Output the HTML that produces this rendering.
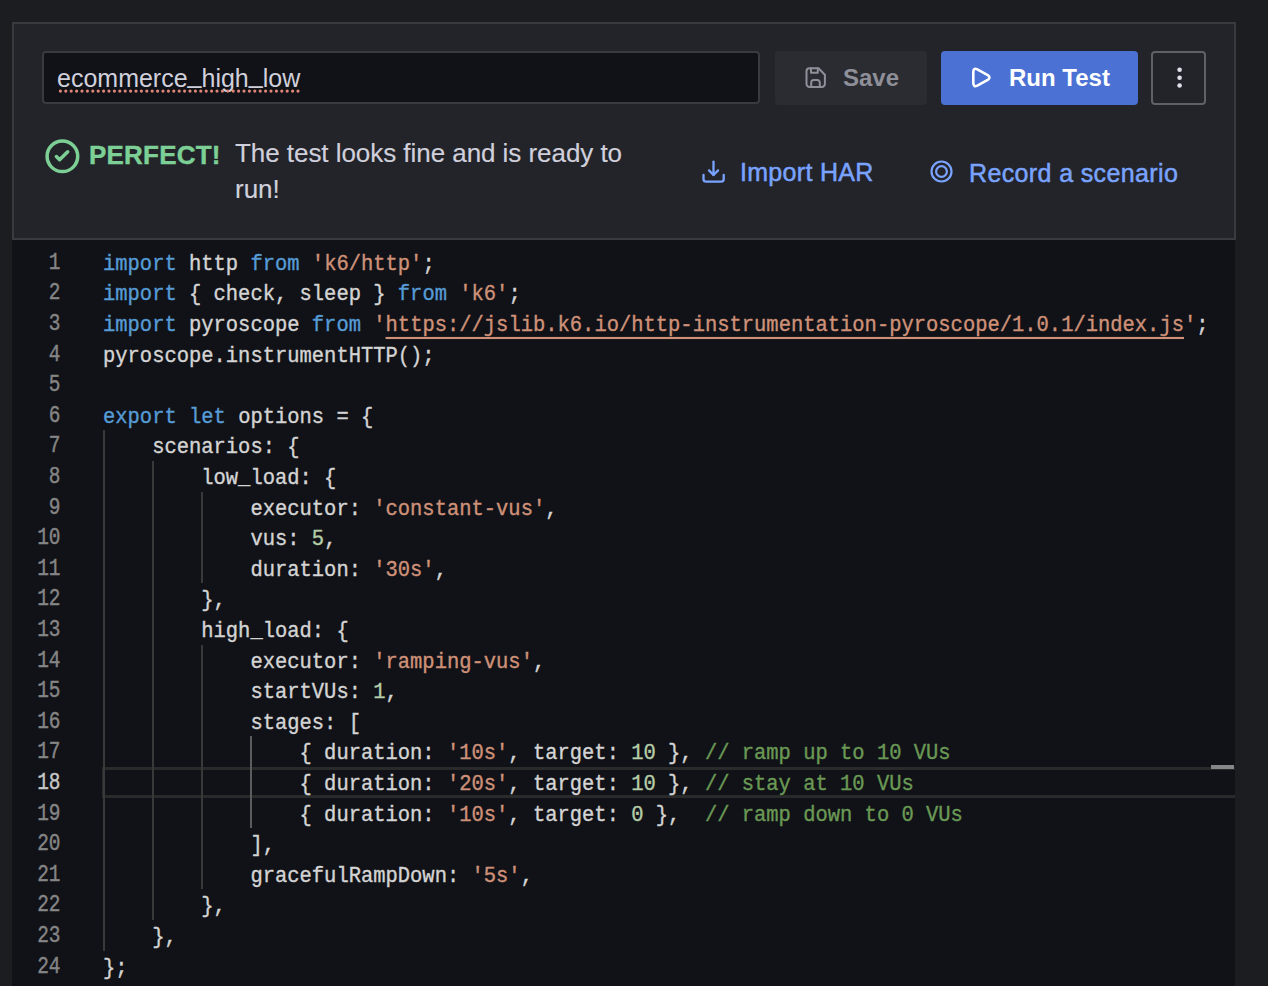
<!DOCTYPE html>
<html><head><meta charset="utf-8">
<style>
html,body{margin:0;padding:0;}
body{width:1268px;height:986px;overflow:hidden;background:#1c1d21;position:relative;font-family:"Liberation Sans",sans-serif;}
.abs{position:absolute;}
.panel{position:absolute;left:12px;top:22px;width:1220px;height:214px;border:2px solid #393a40;background:#232429;}
.inp{position:absolute;left:42px;top:51px;width:714px;height:49px;border:2px solid #393a40;border-radius:4px;background:#111217;}
.txt{position:absolute;white-space:pre;line-height:1;}
.us{position:relative;top:-4px;}
.save{position:absolute;left:775px;top:51px;width:152px;height:54px;border-radius:4px;background:#2b2c31;}
.run{position:absolute;left:941px;top:51px;width:197px;height:54px;border-radius:4px;background:#4a71d3;}
.kebab{position:absolute;left:1151px;top:51px;width:51px;height:50px;border:2px solid #5f6068;border-radius:4px;}
.code{position:absolute;left:12px;top:240px;width:1223px;height:746px;background:#111217;overflow:hidden;font-family:"Liberation Mono",monospace;font-size:20.48px;-webkit-text-stroke:0.35px currentColor;}
.ln{position:absolute;left:0;width:48.5px;text-align:right;color:#858585;height:30.6px;line-height:30.6px;transform:translateY(2px) scale(0.95,1.15);transform-origin:100% 20.5px;}
.ln.act{color:#c6c6c6;}
.cl{position:absolute;left:91px;white-space:pre;color:#d4d4d4;height:30.6px;line-height:30.6px;transform:translateY(2.6px) scaleY(1.06);transform-origin:0 20.5px;}
.k{color:#569cd6}.s{color:#ce9178}.n{color:#b5cea8}.c{color:#6a9955}
.u{color:#ce9178;text-decoration:underline;text-decoration-thickness:2px;text-underline-offset:6px;}
.g{position:absolute;width:2px;background:#393939;}
.g.ga{background:#5c5c5c;}
.cur{position:absolute;left:90px;width:1133px;height:31px;box-sizing:border-box;border:3px solid #2a2a2a;border-right:none;}
</style></head><body>
<div class="panel"></div>
<div class="inp"></div>
<div class="txt" style="left:57px;top:66px;font-size:25px;color:#d0d0dc;letter-spacing:0px">ecommerce<span class="us">_</span>high<span class="us">_</span>low</div>
<svg class="abs" style="left:57px;top:88px" width="250" height="6" fill="#de8577"><circle cx="3.40" cy="3.1" r="1.6"/><circle cx="8.80" cy="3.1" r="1.6"/><circle cx="14.20" cy="3.1" r="1.6"/><circle cx="19.60" cy="3.1" r="1.6"/><circle cx="25.00" cy="3.1" r="1.6"/><circle cx="30.40" cy="3.1" r="1.6"/><circle cx="35.80" cy="3.1" r="1.6"/><circle cx="41.20" cy="3.1" r="1.6"/><circle cx="46.60" cy="3.1" r="1.6"/><circle cx="52.00" cy="3.1" r="1.6"/><circle cx="57.40" cy="3.1" r="1.6"/><circle cx="62.80" cy="3.1" r="1.6"/><circle cx="68.20" cy="3.1" r="1.6"/><circle cx="73.60" cy="3.1" r="1.6"/><circle cx="79.00" cy="3.1" r="1.6"/><circle cx="84.40" cy="3.1" r="1.6"/><circle cx="89.80" cy="3.1" r="1.6"/><circle cx="95.20" cy="3.1" r="1.6"/><circle cx="100.60" cy="3.1" r="1.6"/><circle cx="106.00" cy="3.1" r="1.6"/><circle cx="111.40" cy="3.1" r="1.6"/><circle cx="116.80" cy="3.1" r="1.6"/><circle cx="122.20" cy="3.1" r="1.6"/><circle cx="127.60" cy="3.1" r="1.6"/><circle cx="133.00" cy="3.1" r="1.6"/><circle cx="138.40" cy="3.1" r="1.6"/><circle cx="143.80" cy="3.1" r="1.6"/><circle cx="149.20" cy="3.1" r="1.6"/><circle cx="154.60" cy="3.1" r="1.6"/><circle cx="160.00" cy="3.1" r="1.6"/><circle cx="165.40" cy="3.1" r="1.6"/><circle cx="170.80" cy="3.1" r="1.6"/><circle cx="176.20" cy="3.1" r="1.6"/><circle cx="181.60" cy="3.1" r="1.6"/><circle cx="187.00" cy="3.1" r="1.6"/><circle cx="192.40" cy="3.1" r="1.6"/><circle cx="197.80" cy="3.1" r="1.6"/><circle cx="203.20" cy="3.1" r="1.6"/><circle cx="208.60" cy="3.1" r="1.6"/><circle cx="214.00" cy="3.1" r="1.6"/><circle cx="219.40" cy="3.1" r="1.6"/><circle cx="224.80" cy="3.1" r="1.6"/><circle cx="230.20" cy="3.1" r="1.6"/><circle cx="235.60" cy="3.1" r="1.6"/><circle cx="241.00" cy="3.1" r="1.6"/></svg>
<div class="save"></div>
<svg class="abs" style="left:798px;top:60px" width="36" height="36" fill="none" stroke="#8e8f99" stroke-width="2" stroke-linecap="round" stroke-linejoin="round">
<path d="M11.5 8.3H20.5L26.9 14.7V23.9A3 3 0 0 1 23.9 26.9H11.5A3 3 0 0 1 8.5 23.9V11.3A3 3 0 0 1 11.5 8.3Z"/>
<path d="M13 8.3V12.7H19.8V8.3"/>
<path d="M13.2 26.9V22.5A2.5 2.5 0 0 1 15.7 20H19.3A2.5 2.5 0 0 1 21.8 22.5V26.9"/>
</svg>
<div class="txt" style="left:843px;top:66px;font-size:24px;font-weight:700;color:#8e8f99;">Save</div>
<div class="run"></div>
<svg class="abs" style="left:962px;top:60px" width="36" height="36" fill="none" stroke="#fff" stroke-width="2.6" stroke-linejoin="round">
<path d="M11.3 12.2Q11.3 7.4 15.3 9.4L26.2 15.4Q28.7 17.5 26.2 19.6L15.3 25.6Q11.3 27.6 11.3 22.8Z"/>
</svg>
<div class="txt" style="left:1009px;top:66px;font-size:24px;font-weight:700;color:#fff;">Run Test</div>
<div class="kebab"></div>
<svg class="abs" style="left:1146px;top:46px" width="66" height="64" fill="#e0e0ea">
<circle cx="33.6" cy="23.7" r="2.3"/><circle cx="33.6" cy="31.7" r="2.3"/><circle cx="33.6" cy="39.5" r="2.3"/>
</svg>
<svg class="abs" style="left:42px;top:136px" width="40" height="40" fill="none" stroke="#7cd095" stroke-width="3.5" stroke-linecap="round" stroke-linejoin="round">
<circle cx="20.4" cy="20.3" r="15.3"/>
<path d="M14.4 20.5L17.6 23.7L25.7 15.8"/>
</svg>
<div class="txt" style="left:89px;top:142px;font-size:26px;font-weight:700;color:#7cd095;letter-spacing:0.2px;-webkit-text-stroke:0.4px #7cd095">PERFECT!</div>
<div class="txt" style="left:235px;top:140px;font-size:26px;letter-spacing:-0.05px;-webkit-text-stroke:0.15px #d0d0dc;color:#d0d0dc;">The test looks fine and is ready to</div>
<div class="txt" style="left:235px;top:176px;font-size:26px;-webkit-text-stroke:0.15px #d0d0dc;color:#d0d0dc;">run!</div>
<svg class="abs" style="left:696px;top:154px" width="36" height="36" fill="none" stroke="#79a3ff" stroke-width="2.3" stroke-linecap="round" stroke-linejoin="round">
<path d="M17.5 7.6V21"/><path d="M13 16.4L17.5 21L22.1 16.4"/>
<path d="M7.5 21V25A2.7 2.7 0 0 0 10.2 27.7H25A2.7 2.7 0 0 0 27.7 25V21"/>
</svg>
<div class="txt" style="left:740px;top:160px;font-size:25px;letter-spacing:0.3px;-webkit-text-stroke:0.5px #79a3ff;color:#79a3ff;">Import HAR</div>
<svg class="abs" style="left:924px;top:154px" width="36" height="36" fill="none" stroke="#79a3ff" stroke-width="2.2">
<circle cx="17.5" cy="17.5" r="10"/><circle cx="17.5" cy="17.5" r="5.4"/>
</svg>
<div class="txt" style="left:969px;top:161px;font-size:25px;letter-spacing:0.37px;-webkit-text-stroke:0.5px #79a3ff;color:#79a3ff;">Record a scenario</div>
<div class="code">
<div class="cur" style="top:527.00px"></div>
<div class="g" style="left:90.90px;top:190.40px;height:520.20px"></div>
<div class="g" style="left:140.02px;top:221.00px;height:459.00px"></div>
<div class="g" style="left:189.14px;top:251.60px;height:91.80px"></div>
<div class="g" style="left:189.14px;top:404.60px;height:244.80px"></div>
<div class="g ga" style="left:238.26px;top:496.40px;height:91.80px"></div>
<div class="ln" style="top:6.80px">1</div>
<div class="cl" style="top:6.80px"><span class="k">import</span> http <span class="k">from</span> <span class="s">&#x27;k6/http&#x27;</span>;</div>
<div class="ln" style="top:37.40px">2</div>
<div class="cl" style="top:37.40px"><span class="k">import</span> { check, sleep } <span class="k">from</span> <span class="s">&#x27;k6&#x27;</span>;</div>
<div class="ln" style="top:68.00px">3</div>
<div class="cl" style="top:68.00px"><span class="k">import</span> pyroscope <span class="k">from</span> <span class="s">&#x27;</span><span class="u">https://jslib.k6.io/http-instrumentation-pyroscope/1.0.1/index.js</span><span class="s">&#x27;</span>;</div>
<div class="ln" style="top:98.60px">4</div>
<div class="cl" style="top:98.60px">pyroscope.instrumentHTTP();</div>
<div class="ln" style="top:129.20px">5</div>
<div class="cl" style="top:129.20px"></div>
<div class="ln" style="top:159.80px">6</div>
<div class="cl" style="top:159.80px"><span class="k">export</span> <span class="k">let</span> options = {</div>
<div class="ln" style="top:190.40px">7</div>
<div class="cl" style="top:190.40px">    scenarios: {</div>
<div class="ln" style="top:221.00px">8</div>
<div class="cl" style="top:221.00px">        low_load: {</div>
<div class="ln" style="top:251.60px">9</div>
<div class="cl" style="top:251.60px">            executor: <span class="s">&#x27;constant-vus&#x27;</span>,</div>
<div class="ln" style="top:282.20px">10</div>
<div class="cl" style="top:282.20px">            vus: <span class="n">5</span>,</div>
<div class="ln" style="top:312.80px">11</div>
<div class="cl" style="top:312.80px">            duration: <span class="s">&#x27;30s&#x27;</span>,</div>
<div class="ln" style="top:343.40px">12</div>
<div class="cl" style="top:343.40px">        },</div>
<div class="ln" style="top:374.00px">13</div>
<div class="cl" style="top:374.00px">        high_load: {</div>
<div class="ln" style="top:404.60px">14</div>
<div class="cl" style="top:404.60px">            executor: <span class="s">&#x27;ramping-vus&#x27;</span>,</div>
<div class="ln" style="top:435.20px">15</div>
<div class="cl" style="top:435.20px">            startVUs: <span class="n">1</span>,</div>
<div class="ln" style="top:465.80px">16</div>
<div class="cl" style="top:465.80px">            stages: [</div>
<div class="ln" style="top:496.40px">17</div>
<div class="cl" style="top:496.40px">                { duration: <span class="s">&#x27;10s&#x27;</span>, target: <span class="n">10</span> }, <span class="c">// ramp up to 10 VUs</span></div>
<div class="ln act" style="top:527.00px">18</div>
<div class="cl" style="top:527.00px">                { duration: <span class="s">&#x27;20s&#x27;</span>, target: <span class="n">10</span> }, <span class="c">// stay at 10 VUs</span></div>
<div class="ln" style="top:557.60px">19</div>
<div class="cl" style="top:557.60px">                { duration: <span class="s">&#x27;10s&#x27;</span>, target: <span class="n">0</span> },  <span class="c">// ramp down to 0 VUs</span></div>
<div class="ln" style="top:588.20px">20</div>
<div class="cl" style="top:588.20px">            ],</div>
<div class="ln" style="top:618.80px">21</div>
<div class="cl" style="top:618.80px">            gracefulRampDown: <span class="s">&#x27;5s&#x27;</span>,</div>
<div class="ln" style="top:649.40px">22</div>
<div class="cl" style="top:649.40px">        },</div>
<div class="ln" style="top:680.00px">23</div>
<div class="cl" style="top:680.00px">    },</div>
<div class="ln" style="top:710.60px">24</div>
<div class="cl" style="top:710.60px">};</div>
</div>
<div class="abs" style="left:1211px;top:765px;width:23px;height:4px;background:#868786"></div>
</body></html>
